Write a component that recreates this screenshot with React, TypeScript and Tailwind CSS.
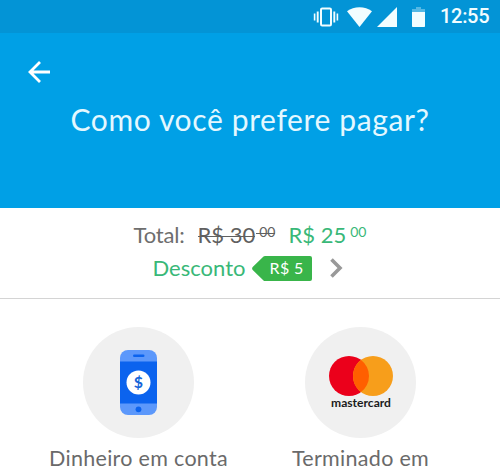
import React from 'react';

const StatusBar = () => (
  <div className="flex h-[33px] items-center justify-end bg-[#0394d6] pr-[11px] text-[#f2fdff]">
    <svg width="26" height="20" viewBox="0 0 26 20" className="mr-[8px]" fill="none" stroke="currentColor">
      <rect x="8" y="1.5" width="10" height="17" rx="1.2" strokeWidth="2" />
      <path d="M4.7 4.5v11M21.3 4.5v11" strokeWidth="1.9" />
      <path d="M1.6 6.5v7M24.4 6.5v7" strokeWidth="1.6" />
    </svg>
    <svg width="25" height="20" viewBox="0 0 25 20" className="mr-[5px]" fill="currentColor">
      <path d="M12.5 20 0 4.3C3.6 1.6 7.9 .2 12.5 .2S21.4 1.6 25 4.3Z" />
    </svg>
    <svg width="20" height="20" viewBox="0 0 20 20" className="mr-[15px]" fill="currentColor">
      <path d="M20 0v20H0Z" />
    </svg>
    <svg width="13" height="20" viewBox="0 0 13 20" className="mr-[15px]" fill="currentColor">
      <path d="M4 0h5v2h4v3H0V2h4Z" opacity=".35" />
      <path d="M0 5h13v14.2q0 .8-.8.8H.8q-.8 0-.8-.8Z" />
    </svg>
    <span className="w-[49px] whitespace-nowrap font-[Roboto,sans-serif] text-[20px] leading-[35px] font-medium tracking-[-0.3px]">
      12:55
    </span>
  </div>
);

const Header = () => (
  <header className="h-[175px] bg-[#00a0e6] text-[#e4f8ff]">
    <div className="flex pt-[28px] pl-[28px]">
      <svg width="22" height="22" viewBox="0 0 22 22" fill="none" stroke="#fff" strokeWidth="2.8">
        <path d="M22 11H2M12 1 2 11l10 10" />
      </svg>
    </div>
    <h1 className="mt-[17px] text-center text-[30px] leading-[38px] font-normal whitespace-nowrap tracking-[0.63px]">
      Como você prefere pagar?
    </h1>
  </header>
);

const Summary = () => (
  <section className="h-[91px] border-b border-[#d4d4d4] pt-[11px] text-[22px] leading-[32px] whitespace-nowrap">
    <div className="flex justify-center text-[#6e6e6e]">
      <span className="mr-[13px] tracking-[-0.2px]">Total:</span>
      <span className="relative mr-[13px] flex text-[#606060]">
        R$ 30
        <sup className="relative top-0 ml-[4px] text-[14px] leading-[26px]">
          00
          <span className="absolute top-[14px] right-0 -left-[3px] h-px bg-[#606060]" />
        </sup>
        <span className="absolute top-[17px] right-[20px] left-0 h-px bg-[#606060]" />
      </span>
      <span className="flex text-[#39b878]">
        R$ 25
        <sup className="top-0 ml-[4px] text-[14px] leading-[26px]">00</sup>
      </span>
    </div>
    <div className="mt-[1px] flex items-center justify-center pr-[4px] text-[#39b878]">
      <span>Desconto</span>
      <span className="relative ml-[7px] flex h-[25px] w-[60px] items-center pl-[17px] text-[16px] tracking-[0.4px] text-white">
        <svg className="absolute inset-0" width="60" height="25" viewBox="0 0 60 25">
          <path d="M11.5 .6Q12 0 13 0h45q2 0 2 2v21q0 2-2 2H13q-1 0-1.5-.6L.7 14q-1.2-1.5 0-3Z" fill="#39b54a" />
        </svg>
        <span className="relative">R$ 5</span>
      </span>
      <svg width="13" height="20" viewBox="0 0 13 20" className="ml-[18px]" fill="none" stroke="#999" strokeWidth="3.6">
        <path d="m1.5 1.5 8.5 8.5-8.5 8.5" />
      </svg>
    </div>
  </section>
);

const PhoneIcon = () => (
  <svg width="37" height="65" viewBox="0 0 37 65">
    <rect width="37" height="65" rx="8" fill="#5c98fb" />
    <path d="M0 11.5h37v42H0Z" fill="#0b63ee" />
    <rect x="13" y="4.5" width="11.5" height="2.6" rx="1.3" fill="#0b63ee" />
    <circle cx="18.5" cy="59.3" r="2.9" fill="#0b63ee" />
    <circle cx="18.5" cy="32.5" r="12" fill="#fff" />
    <text x="18.5" y="38" textAnchor="middle" fontSize="16" fontWeight="700" fill="#1765d8">
      $
    </text>
  </svg>
);

const MastercardLogo = () => (
  <svg width="64" height="54" viewBox="0 0 64 54">
    <circle cx="20" cy="20" r="20" fill="#eb001b" />
    <circle cx="44" cy="20" r="20" fill="#f79e1b" />
    <path d="M32 4a20 20 0 0 1 0 32 20 20 0 0 1 0-32Z" fill="#ff5f00" />
    <text
      x="32"
      y="51"
      textAnchor="middle"
      fontSize="10.5"
      fontWeight="700"
      textLength="60"
      lengthAdjust="spacingAndGlyphs"
      fill="#1b1b1b"
    >
      mastercard
    </text>
  </svg>
);

type OptionProps = {
  label: string;
  children: React.ReactNode;
};

const PaymentOption = ({ label, children }: OptionProps) => (
  <div className="flex w-[222px] flex-col items-center">
    <div className="flex size-[111px] items-center justify-center rounded-full bg-[#f0f0f0]">{children}</div>
    <span className="mt-[9px] text-[21.5px] leading-[22px] whitespace-nowrap tracking-[0.3px] text-[#6a6a6a]">
      {label}
    </span>
  </div>
);

const App = () => {
  return (
    <main className="h-[469px] w-[500px] bg-white font-[Lato,sans-serif]">
      <StatusBar />
      <Header />
      <Summary />
      <section className="flex pt-[28px] pl-[27.5px]">
        <PaymentOption label="Dinheiro em conta">
          <PhoneIcon />
        </PaymentOption>
        <PaymentOption label="Terminado em">
          <MastercardLogo />
        </PaymentOption>
      </section>
    </main>
  );
};

export default App;
